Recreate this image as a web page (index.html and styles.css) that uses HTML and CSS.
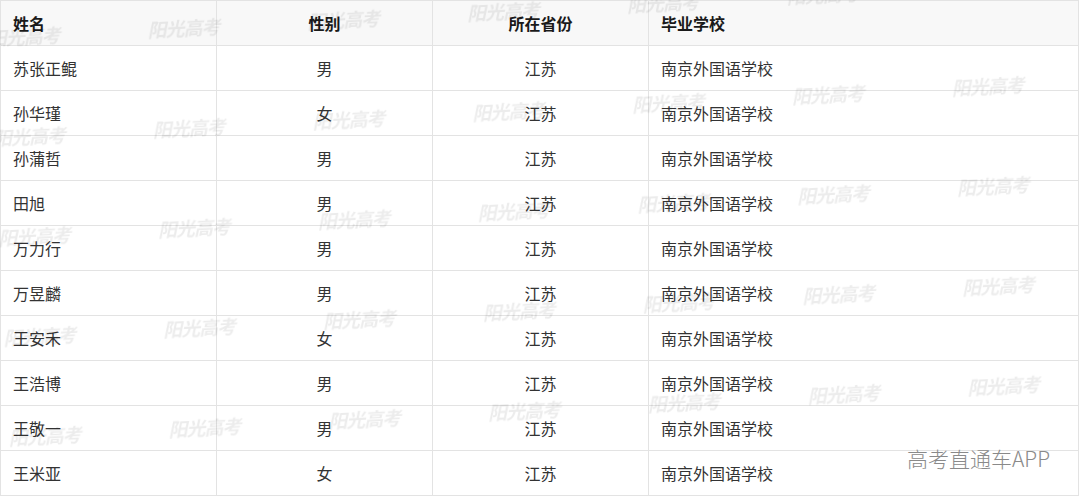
FILE: index.html
```html
<!DOCTYPE html>
<html lang="zh-CN">
<head>
    <meta charset="UTF-8">
    <title>南京外国语学校 名单</title>
    <link rel="stylesheet" href="styles.css">
</head>
<body>
    <div class="page">
        <table class="roster">
            <colgroup>
                <col class="col-name">
                <col class="col-sex">
                <col class="col-prov">
                <col class="col-school">
            </colgroup>
            <thead>
                <tr>
                    <th class="left">姓名</th>
                    <th>性别</th>
                    <th>所在省份</th>
                    <th class="left">毕业学校</th>
                </tr>
            </thead>
            <tbody>
                <tr><td class="left">苏张正鲲</td><td>男</td><td>江苏</td><td class="left">南京外国语学校</td></tr>
                <tr><td class="left">孙华瑾</td><td>女</td><td>江苏</td><td class="left">南京外国语学校</td></tr>
                <tr><td class="left">孙蒲哲</td><td>男</td><td>江苏</td><td class="left">南京外国语学校</td></tr>
                <tr><td class="left">田旭</td><td>男</td><td>江苏</td><td class="left">南京外国语学校</td></tr>
                <tr><td class="left">万力行</td><td>男</td><td>江苏</td><td class="left">南京外国语学校</td></tr>
                <tr><td class="left">万昱麟</td><td>男</td><td>江苏</td><td class="left">南京外国语学校</td></tr>
                <tr><td class="left">王安禾</td><td>女</td><td>江苏</td><td class="left">南京外国语学校</td></tr>
                <tr><td class="left">王浩博</td><td>男</td><td>江苏</td><td class="left">南京外国语学校</td></tr>
                <tr><td class="left">王敬一</td><td>男</td><td>江苏</td><td class="left">南京外国语学校</td></tr>
                <tr><td class="left">王米亚</td><td>女</td><td>江苏</td><td class="left">南京外国语学校</td></tr>
            </tbody>
        </table>

        <!-- faint repeated watermark over the table -->
        <div class="watermark">
            <span>阳光高考</span><span>阳光高考</span><span>阳光高考</span><span>阳光高考</span><span>阳光高考</span><span>阳光高考</span><span>阳光高考</span><span>阳光高考</span>
            <span>阳光高考</span><span>阳光高考</span><span>阳光高考</span><span>阳光高考</span><span>阳光高考</span><span>阳光高考</span><span>阳光高考</span><span>阳光高考</span>
            <span>阳光高考</span><span>阳光高考</span><span>阳光高考</span><span>阳光高考</span><span>阳光高考</span><span>阳光高考</span><span>阳光高考</span><span>阳光高考</span>
            <span>阳光高考</span><span>阳光高考</span><span>阳光高考</span><span>阳光高考</span><span>阳光高考</span><span>阳光高考</span><span>阳光高考</span><span>阳光高考</span>
            <span>阳光高考</span><span>阳光高考</span><span>阳光高考</span><span>阳光高考</span><span>阳光高考</span><span>阳光高考</span><span>阳光高考</span><span>阳光高考</span>
        </div>

        <div class="brand">高考直通车APP</div>
    </div>
</body>
</html>
```

FILE: styles.css
```css
html, body {
    margin: 0;
    padding: 0;
    background: white;
}

body {
    font-family: "Noto Sans CJK SC", "Liberation Sans", sans-serif;
    overflow: hidden;
}

.page {
    position: relative;
    width: 1080px;
    height: 497px;
    overflow: hidden;
}

.roster {
    width: 1079px;
    border-collapse: collapse;
    table-layout: fixed;
    font-size: 16px;
    color: #333;
}

.col-name,
.col-sex,
.col-prov {
    width: 216px;
}

.roster th,
.roster td {
    height: 44px;
    padding: 0 12px;
    border: 1px solid #e3e3e3;
    text-align: center;
    line-height: 20px;
}

.roster th {
    background: #f8f8f8;
    color: #1a1a1a;
    font-weight: bold;
}

.roster .left {
    text-align: left;
}

.watermark {
    position: absolute;
    left: -13px;
    top: 27px;
    display: grid;
    grid-template-columns: repeat(8, 160px);
    grid-auto-rows: 100px;
    transform: rotate(-3deg);
    transform-origin: 0 0;
    pointer-events: none;
}

.watermark span {
    font-size: 19px;
    line-height: 22px;
    font-weight: bold;
    font-style: italic;
    color: rgba(0, 0, 0, 0.075);
    letter-spacing: -1px;
    filter: blur(0.4px);
}

.brand {
    position: absolute;
    right: 30px;
    top: 444px;
    font-size: 21px;
    line-height: 28px;
    color: #8a8a8a;
    font-weight: 300;
}
```
